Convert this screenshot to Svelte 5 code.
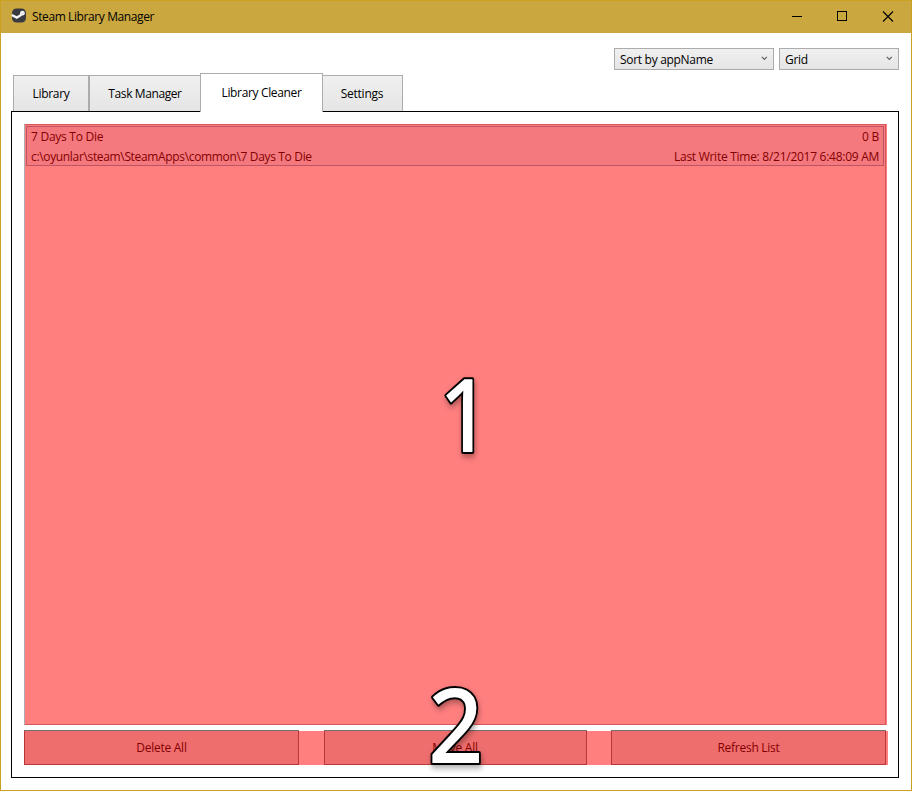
<script>
  const tabs = [
    { label: 'Library', width: 76, spacing: -0.3 },
    { label: 'Task Manager', width: 112, spacing: -0.4, joined: true },
    { label: 'Library Cleaner', width: 123, spacing: -0.35, joined: true, active: true },
    { label: 'Settings', width: 81, spacing: -0.25 }
  ];
  const actions = [
    { label: 'Delete All', width: 275 },
    { label: 'Move All', width: 263 },
    { label: 'Refresh List', width: 275 }
  ];
  const selects = [
    { label: 'Sort by appName', width: 160 },
    { label: 'Grid', width: 120 }
  ];
</script>

<div class="window">
  <header>
    <svg class="logo" width="16" height="16" viewBox="0 0 16 16">
      <rect x="1" y="0.5" width="14" height="14" rx="4.5" fill="#393b40" />
      <path d="M0.8 7 L5.8 9.6 L9.4 7.4 L11.4 5.2" fill="none" stroke="#f5f5f5" stroke-width="2.4" />
      <circle cx="11.4" cy="5.2" r="2.4" fill="#f5f5f5" />
      <circle cx="11.4" cy="5.2" r="1" fill="#dcdcdc" />
    </svg>
    <span class="title">Steam Library Manager</span>
    <svg class="controls" width="120" height="32" viewBox="0 0 120 32" fill="none" stroke="#000" shape-rendering="crispEdges">
      <path d="M0 15.5h10" />
      <rect x="45.5" y="10.5" width="9" height="9" />
      <path d="M91 10.5l10 10M101 10.5l-10 10" shape-rendering="auto" stroke-width="1.1" />
    </svg>
  </header>

  <div class="toolbar">
    {#each selects as s}
      <div class="select" style="width: {s.width}px">
        <span>{s.label}</span>
        <svg width="7" height="5" viewBox="0 0 7 5"><path d="M0.8 0.8L3.3 3.3L5.8 0.8" fill="none" stroke="#606060" stroke-width="1.2" /></svg>
      </div>
    {/each}
  </div>

  <nav>
    {#each tabs as tab}
      <div class="tab" class:joined={tab.joined} class:active={tab.active} style="width: {tab.width}px; letter-spacing: {tab.spacing}px">
        <span>{tab.label}</span>
      </div>
    {/each}
  </nav>

  <main>
    <section class="listing">
      <div class="list">
        <div class="item">
          <div class="line"><span>7 Days To Die</span><span>0 B</span></div>
          <div class="line">
            <span class="path">c:\oyunlar\steam\SteamApps\common\7 Days To Die</span>
            <span class="time">Last Write Time: 8/21/2017 6:48:09 AM</span>
          </div>
        </div>
      </div>
      <div class="shade"></div>
      <svg class="mark one" width="80" height="100"><text transform="translate(14 88) scale(0.88 1)">1</text></svg>
    </section>
    <section class="actions">
      {#each actions as a}
        <div class="button" style="width: {a.width}px"><span>{a.label}</span></div>
      {/each}
      <div class="shade"></div>
      <svg class="mark two" width="80" height="100"><text transform="translate(12 88) scale(0.95 1.01)">2</text></svg>
    </section>
  </main>
</div>

<style>
  :global(body) { background: #fff; }
  .window {
    box-sizing: border-box;
    width: 912px;
    height: 791px;
    border: 1px solid #cba21f;
    background: #fff;
    color: #000;
    font: 12px/16px "Open Sans", "Noto Sans", sans-serif;
    letter-spacing: -0.27px;
    white-space: nowrap;
    overflow: hidden;
  }
  header {
    display: flex;
    height: 32px;
    background: #cba83f;
  }
  .logo { margin: 7px 0 0 10px; }
  .title { margin: 8px 0 0 5px; letter-spacing: -0.4px; }
  .controls { margin-left: auto; margin-right: -1px; }
  .toolbar {
    display: flex;
    justify-content: flex-end;
    gap: 5px;
    padding: 15px 12px 0 0;
    height: 22px;
  }
  .select {
    box-sizing: border-box;
    display: flex;
    align-items: center;
    justify-content: space-between;
    height: 22px;
    padding: 2px 5px 0 5px;
    border: 1px solid #acacac;
    background: linear-gradient(#f0f0f0, #e5e5e5);
    letter-spacing: -0.3px;
  }
  .select svg { margin-top: -3px; }
  nav {
    position: relative;
    z-index: 1;
    display: flex;
    align-items: flex-end;
    height: 41px;
    padding-left: 12px;
  }
  .tab {
    box-sizing: border-box;
    display: flex;
    align-items: center;
    justify-content: center;
    height: 36px;
    padding-top: 1px;
    border: 1px solid #acacac;
    border-bottom: 0;
    background: linear-gradient(#f0f0f0, #e5e5e5);
  }
  .tab.joined { margin-right: -1px; }
  .tab:last-child { padding-right: 1px; }
  .tab.active {
    position: relative;
    height: 39px;
    margin-bottom: -1px;
    padding-top: 0;
    background: #fff;
  }
  main {
    box-sizing: border-box;
    width: 888px;
    height: 667px;
    margin-left: 10px;
    padding: 12px;
    border: 1px solid #000;
  }
  .listing { position: relative; height: 601px; }
  .list {
    box-sizing: border-box;
    width: 862px;
    height: 601px;
    padding: 1px;
    border: 1px solid #abadb3;
  }
  .item {
    box-sizing: border-box;
    width: 858px;
    height: 40px;
    padding: 2px 4px 0;
    border: 1px solid #7da9c7;
    background: #e6f2fc;
  }
  .line { display: flex; justify-content: space-between; height: 20px; }
  .path { letter-spacing: -0.34px; }
  .shade { position: absolute; background: rgba(255, 0, 0, 0.5); }
  .listing .shade { inset: 0 -1px 0 1px; width: 862px; }
  .actions {
    position: relative;
    display: flex;
    justify-content: space-between;
    width: 862px;
    height: 35px;
    margin-top: 5px;
  }
  .actions .shade { left: 0; top: 1px; width: 864px; height: 34px; }
  .button {
    box-sizing: border-box;
    display: flex;
    align-items: center;
    justify-content: center;
    height: 35px;
    border: 1px solid #707070;
    background: #ddd;
  }
  .mark { position: absolute; overflow: visible; }
  .mark text {
    font: 500 102px "Noto Sans", "Open Sans", sans-serif;
    letter-spacing: 0;
    fill: #fff;
    stroke: #000;
    stroke-width: 4px;
    stroke-linejoin: round;
    paint-order: stroke;
    filter: drop-shadow(1px 3px 3px rgba(0, 0, 0, 0.35));
  }
  .one { left: 401px; top: 240px; }
  .two { left: 392px; top: -55px; }
</style>
